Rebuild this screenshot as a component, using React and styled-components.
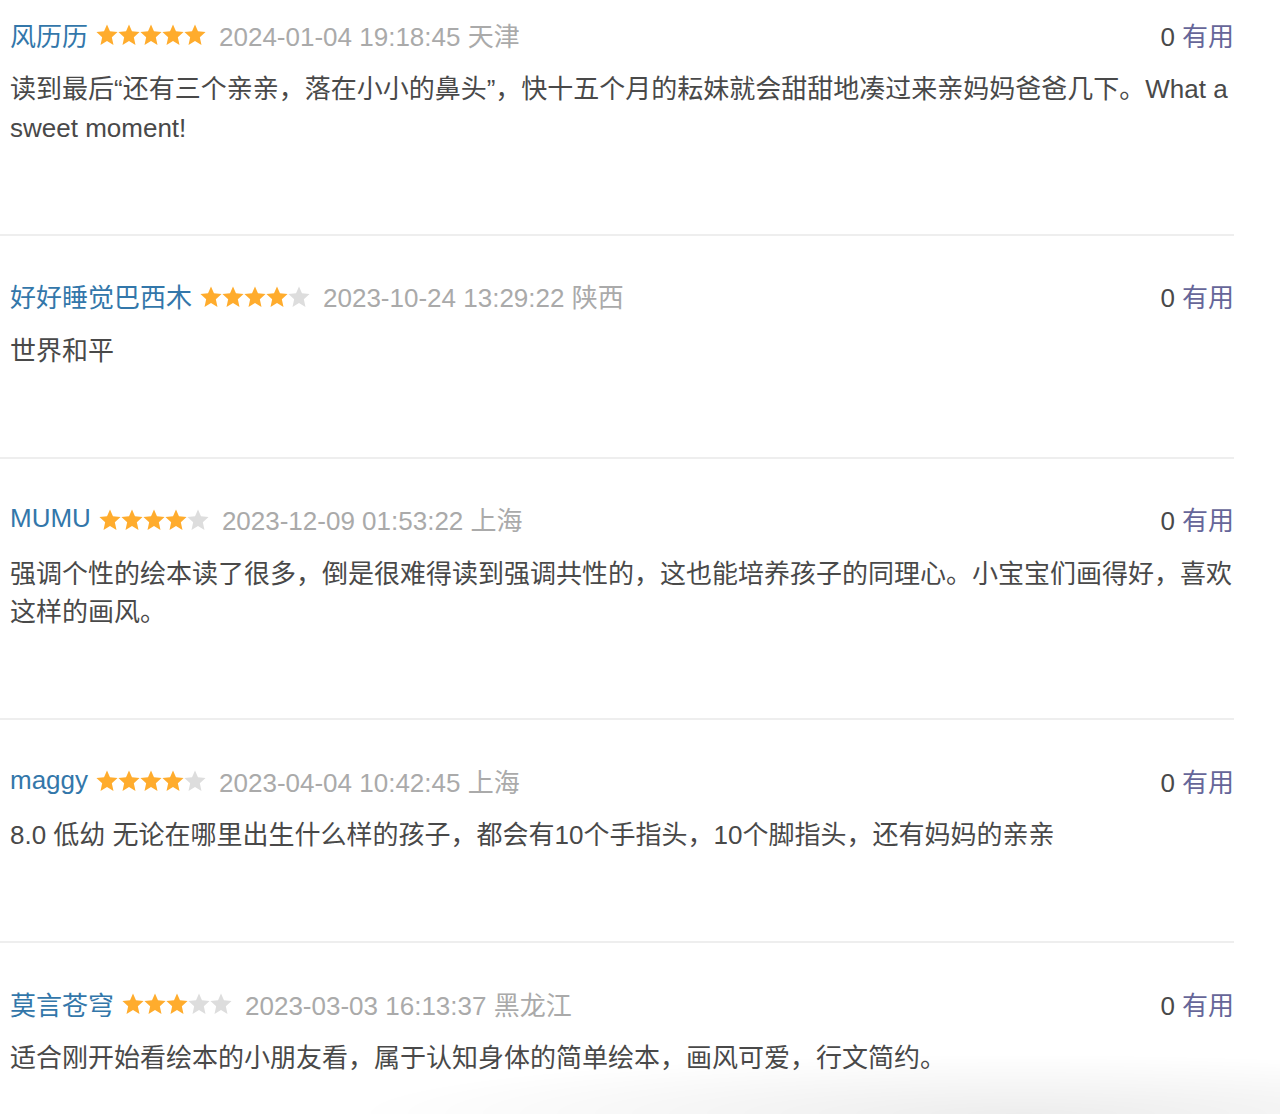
import React from "react";
import styled, { createGlobalStyle } from "styled-components";

const GlobalStyle = createGlobalStyle`
  body {
    margin: 0;
    background: #fff;
    font-family: "Liberation Sans", "Noto Sans CJK SC", sans-serif;
  }
`;

const comments = [
  {
    user: "风历历",
    rating: 5,
    time: "2024-01-04 19:18:45",
    place: "天津",
    votes: 0,
    text: "读到最后“还有三个亲亲，落在小小的鼻头”，快十五个月的耘妹就会甜甜地凑过来亲妈妈爸爸几下。What a sweet moment!",
  },
  {
    user: "好好睡觉巴西木",
    rating: 4,
    time: "2023-10-24 13:29:22",
    place: "陕西",
    votes: 0,
    text: "世界和平",
  },
  {
    user: "MUMU",
    rating: 4,
    time: "2023-12-09 01:53:22",
    place: "上海",
    votes: 0,
    text: "强调个性的绘本读了很多，倒是很难得读到强调共性的，这也能培养孩子的同理心。小宝宝们画得好，喜欢这样的画风。",
  },
  {
    user: "maggy",
    rating: 4,
    time: "2023-04-04 10:42:45",
    place: "上海",
    votes: 0,
    text: "8.0 低幼 无论在哪里出生什么样的孩子，都会有10个手指头，10个脚指头，还有妈妈的亲亲",
  },
  {
    user: "莫言苍穹",
    rating: 3,
    time: "2023-03-03 16:13:37",
    place: "黑龙江",
    votes: 0,
    text: "适合刚开始看绘本的小朋友看，属于认知身体的简单绘本，画风可爱，行文简约。",
  },
];

const List = styled.div`
  width: 1234px;
`;

const Item = styled.div`
  padding: 40px 0 86.5px 10px;
  border-bottom: 2px solid #eee;
  &:first-child {
    padding-top: 14px;
  }
  &:last-child {
    border-bottom: none;
  }
`;

const Header = styled.div`
  display: flex;
  align-items: center;
  height: 40px;
  font-size: 26px;
  white-space: nowrap;
`;

const UserName = styled.a`
  color: #3377aa;
  text-decoration: none;
`;

const Stars = styled.span`
  display: inline-flex;
  align-items: center;
  margin: 2px 0 0 8px;
`;

const Time = styled.span`
  color: #aaa;
  margin-left: 13px;
`;

const Votes = styled.span`
  margin-left: auto;
  color: #494949;
`;

const Useful = styled.a`
  color: #666699;
  text-decoration: none;
  margin-left: 7px;
`;

const Body = styled.p`
  margin: 16px 0 0;
  font-size: 26px;
  line-height: 38.5px;
  color: #494949;
`;

const Overlay = styled.div`
  position: fixed;
  left: 0;
  right: 0;
  bottom: 0;
  height: 80px;
  pointer-events: none;
  background: radial-gradient(ellipse 70% 100% at 80% 100%, rgba(0, 0, 0, 0.07), rgba(0, 0, 0, 0) 75%);
`;

const Star = ({ on }) => (
  <svg width="22" height="22" viewBox="0 0 20 19.2">
    <polygon
      points="10,0 12.7,6.2 19.6,6.9 14.4,11.6 15.9,18.6 10,15 4.1,18.6 5.6,11.6 0.4,6.9 7.3,6.2"
      fill={on ? "#ffac2d" : "#dddddd"}
    />
  </svg>
);

const Comment = ({ c }) => (
  <Item>
    <Header>
      <UserName>{c.user}</UserName>
      <Stars>
        {[0, 1, 2, 3, 4].map(i => (
          <Star key={i} on={i < c.rating} />
        ))}
      </Stars>
      <Time>
        {c.time} {c.place}
      </Time>
      <Votes>
        {c.votes}
        <Useful>有用</Useful>
      </Votes>
    </Header>
    <Body>{c.text}</Body>
  </Item>
);

const App = () => (
  <>
    <GlobalStyle />
    <List>
      {comments.map((c, i) => (
        <Comment key={i} c={c} />
      ))}
    </List>
    <Overlay />
  </>
);

export default App;
